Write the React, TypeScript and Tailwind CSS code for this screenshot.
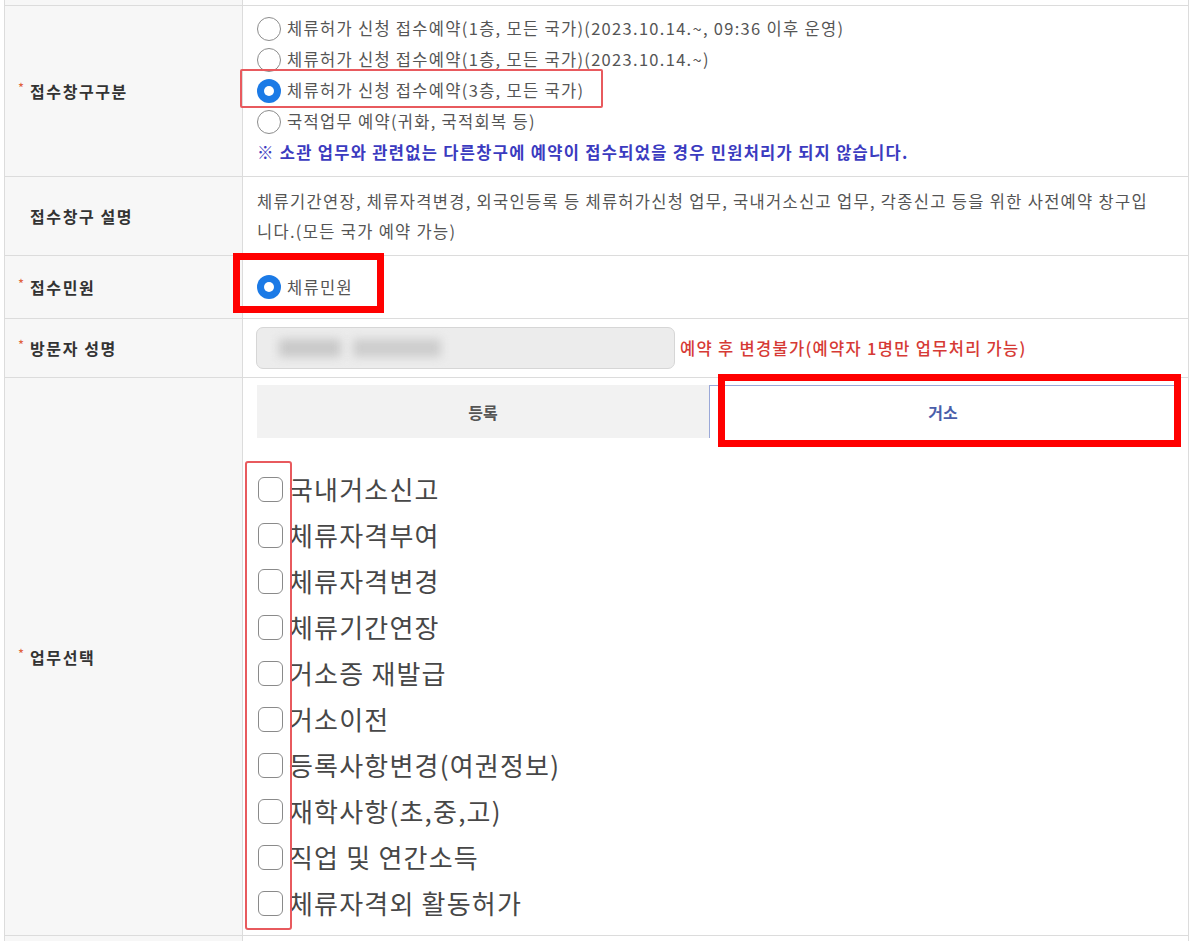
import React from "react";

const FONT = "font-['Noto_Sans_CJK_KR','Noto_Sans',sans-serif]";

function Label({ req, children }: { req?: boolean; children?: React.ReactNode }) {
  return (
    <div className="w-[238px] shrink-0 bg-[#f7f7f7] border-r border-[#dcdcdc] flex items-center pl-[13px]">
      <span className="w-[12px] text-[13px] leading-none text-[#e0603c] -mt-[7px]">{req ? "*" : ""}</span>
      <span className="font-bold text-[16px] text-[#333] tracking-[1.6px]">{children}</span>
    </div>
  );
}

function Radio({ checked }: { checked?: boolean }) {
  if (checked) {
    return (
      <span className="w-[24px] h-[24px] shrink-0 rounded-full bg-[#1b7ae6] flex items-center justify-center">
        <span className="w-[10px] h-[10px] rounded-full bg-white" />
      </span>
    );
  }
  return <span className="w-[24px] h-[24px] shrink-0 rounded-full border-[1.5px] border-[#8c8c8c] bg-white" />;
}

function Checkbox() {
  return <span className="w-[25px] h-[25px] shrink-0 rounded-[6px] border-[1.5px] border-[#8a8a8a] bg-white" />;
}

const items = [
  "국내거소신고",
  "체류자격부여",
  "체류자격변경",
  "체류기간연장",
  "거소증 재발급",
  "거소이전",
  "등록사항변경(여권정보)",
  "재학사항(초,중,고)",
  "직업 및 연간소득",
  "체류자격외 활동허가",
];

export default function App() {
  return (
    <div className={`${FONT} bg-white w-[1200px] h-[941px] overflow-hidden`}>
      <div className="ml-[4px] w-[1185px] border-l border-r border-[#dcdcdc]">
        {/* partial top row */}
        <div className="flex h-[6px] border-b border-[#dcdcdc]">
          <div className="w-[238px] shrink-0 bg-[#f7f7f7] border-r border-[#dcdcdc]" />
          <div className="flex-1" />
        </div>

        {/* 접수창구구분 */}
        <div className="flex h-[171px] border-b border-[#dcdcdc]">
          <Label req>접수창구구분</Label>
          <div className="flex-1 pl-[14px] pt-[7px] text-[16.5px] tracking-[1.3px] leading-[31px] text-[#555]">
            <div className="flex items-center gap-[6px]">
              <Radio />
              <span>체류허가 신청 접수예약(1층, 모든 국가)(2023.10.14.~, 09:36 이후 운영)</span>
            </div>
            <div className="flex items-center gap-[6px]">
              <Radio />
              <span>체류허가 신청 접수예약(1층, 모든 국가)(2023.10.14.~)</span>
            </div>
            <div className="relative flex items-center gap-[6px]">
              <Radio checked />
              <span>체류허가 신청 접수예약(3층, 모든 국가)</span>
              <div className="absolute left-[-17px] w-[363px] top-[-6px] bottom-[-2px] border-2 border-[#e85a5e] rounded-[2px]" />
            </div>
            <div className="flex items-center gap-[6px]">
              <Radio />
              <span>국적업무 예약(귀화, 국적회복 등)</span>
            </div>
            <div className="font-bold text-[#3b3bbf]">
              ※ 소관 업무와 관련없는 다른창구에 예약이 접수되었을 경우 민원처리가 되지 않습니다.
            </div>
          </div>
        </div>

        {/* 접수창구 설명 */}
        <div className="flex h-[79px] border-b border-[#dcdcdc]">
          <Label>접수창구 설명</Label>
          <div className="flex-1 pl-[14px] flex items-center text-[16.5px] tracking-[1.3px] leading-[30px] text-[#555] whitespace-nowrap">
            <div>
              체류기간연장, 체류자격변경, 외국인등록 등 체류허가신청 업무, 국내거소신고 업무, 각종신고 등을 위한 사전예약 창구입
              <br />
              니다.(모든 국가 예약 가능)
            </div>
          </div>
        </div>

        {/* 접수민원 */}
        <div className="flex h-[63px] border-b border-[#dcdcdc]">
          <Label req>접수민원</Label>
          <div className="relative flex-1 pl-[14px] flex items-center gap-[6px] text-[16.5px] tracking-[1.3px] text-[#555]">
            <Radio checked />
            <span>체류민원</span>
            <div className="absolute left-[-10px] top-[-3px] w-[151px] h-[60px] border-[7px] border-[#ff0000]" />
          </div>
        </div>

        {/* 방문자 성명 */}
        <div className="flex h-[59px] border-b border-[#dcdcdc]">
          <Label req>방문자 성명</Label>
          <div className="flex-1 pl-[13px] flex items-center">
            <div className="w-[419px] h-[42px] rounded-[7px] bg-[#ececec] border border-[#d6d6d6] flex items-center pl-[22px] gap-[12px] overflow-hidden">
              <span className="block w-[62px] h-[18px] bg-[#c9c9c9] blur-[5px]" />
              <span className="block w-[88px] h-[18px] bg-[#cdcdcd] blur-[5px]" />
            </div>
            <span className="ml-[5px] text-[16.5px] tracking-[1.3px] font-medium text-[#d63a35] whitespace-nowrap">
              예약 후 변경불가(예약자 1명만 업무처리 가능)
            </span>
          </div>
        </div>

        {/* 업무선택 */}
        <div className="flex h-[558px] border-b border-[#dcdcdc]">
          <Label req>업무선택</Label>
          <div className="flex-1 pl-[14px] pr-[11px] pt-[7px]">
            <div className="flex h-[53px]">
              <div className="w-[452px] bg-[#f2f2f2] flex items-center justify-center font-bold text-[16px] text-[#555]">
                등록
              </div>
              <div className="relative flex-1 bg-white border-l border-t border-r border-[#9aa8d8] flex items-center justify-center font-bold text-[16px] text-[#4a5eaa]">
                거소
                <div className="absolute left-[8px] right-[-5px] top-[-12px] bottom-[-9px] border-[7px] border-[#ff0000]" />
              </div>
            </div>
            <div className="relative mt-[23px] pt-[5px] pb-[4px]">
              {items.map((t) => (
                <div key={t} className="h-[46px] flex items-center gap-[6px] pl-[1px]">
                  <Checkbox />
                  <span className="text-[26px] tracking-[1.2px] text-[#474747] leading-none whitespace-nowrap">{t}</span>
                </div>
              ))}
              <div className="absolute left-[-12px] w-[47px] top-0 bottom-0 border-2 border-[#e85a5e] rounded-[3px]" />
            </div>
          </div>
        </div>

        {/* partial bottom row */}
        <div className="flex h-[10px]">
          <div className="w-[238px] shrink-0 bg-[#f7f7f7] border-r border-[#dcdcdc]" />
          <div className="flex-1" />
        </div>
      </div>
    </div>
  );
}
